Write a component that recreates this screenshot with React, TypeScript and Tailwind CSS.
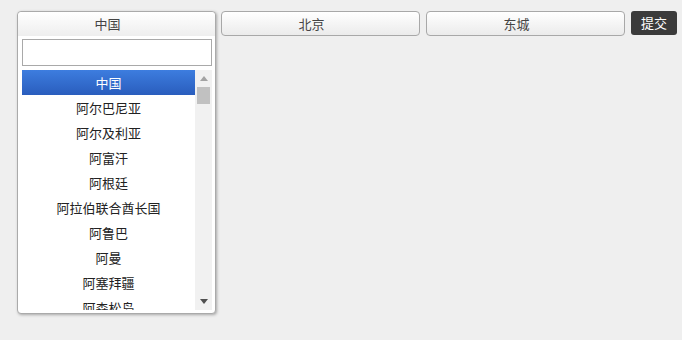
import React from 'react'

const countries = [
  '中国',
  '阿尔巴尼亚',
  '阿尔及利亚',
  '阿富汗',
  '阿根廷',
  '阿拉伯联合酋长国',
  '阿鲁巴',
  '阿曼',
  '阿塞拜疆',
  '阿森松岛',
]

const font = { fontFamily: '"Noto Sans CJK SC", "Noto Sans", sans-serif' }

function SelectButton({ label }: { label: string }) {
  return (
    <div className="w-[199px] h-[25px] border border-[#a8a8a8] rounded-[4px] bg-gradient-to-b from-white to-[#ebebeb] text-[13px] text-[#444] leading-[23px] text-center pr-[18px]">
      {label}
    </div>
  )
}

export default function App() {
  return (
    <div className="w-full h-[340px] bg-[#efefef] pt-[11px] pl-[17px] flex items-start" style={font}>
      <div className="w-[199px] h-[303px] border border-[#aaaaaa] rounded-[4px] bg-white shadow-[1px_1px_3px_rgba(0,0,0,0.3)] flex flex-col">
        <div className="h-[24px] rounded-t-[4px] bg-gradient-to-b from-white to-[#eeeeee] text-[13px] text-[#444] leading-[24px] text-center pr-[18px]">
          中国
        </div>
        <div className="px-[4px] pt-[3px]">
          <input className="block w-[190px] h-[27px] border border-[#a9a9a9] bg-white outline-none" />
        </div>
        <div className="ml-[4px] mt-[4px] w-[190px] h-[240px] flex overflow-hidden">
          <ul className="w-[173px] text-[13px] text-[#222]">
            {countries.map((c, i) => (
              <li
                key={c}
                className={
                  i === 0
                    ? 'h-[25px] leading-[25px] text-center text-white bg-gradient-to-b from-[#3d7ddf] to-[#2a5dbd]'
                    : 'h-[25px] leading-[25px] text-center'
                }
              >
                {c}
              </li>
            ))}
          </ul>
          <div className="w-[17px] h-full bg-[#f1f1f1] flex flex-col items-center">
            <div className="h-[17px] flex items-center justify-center">
              <svg width="8" height="5" viewBox="0 0 8 5">
                <path d="M0 5 L4 0 L8 5 Z" fill="#a3a3a3" />
              </svg>
            </div>
            <div className="w-[13px] h-[17px] bg-[#c1c1c1]" />
            <div className="flex-1" />
            <div className="h-[17px] flex items-center justify-center">
              <svg width="8" height="5" viewBox="0 0 8 5">
                <path d="M0 0 L8 0 L4 5 Z" fill="#505050" />
              </svg>
            </div>
          </div>
        </div>
      </div>
      <div className="ml-[5px]">
        <SelectButton label="北京" />
      </div>
      <div className="ml-[6px]">
        <SelectButton label="东城" />
      </div>
      <button className="ml-[6px] w-[46px] h-[24px] rounded-[3px] bg-[#3b3b3b] text-white text-[13px] leading-[24px]">
        提交
      </button>
    </div>
  )
}
